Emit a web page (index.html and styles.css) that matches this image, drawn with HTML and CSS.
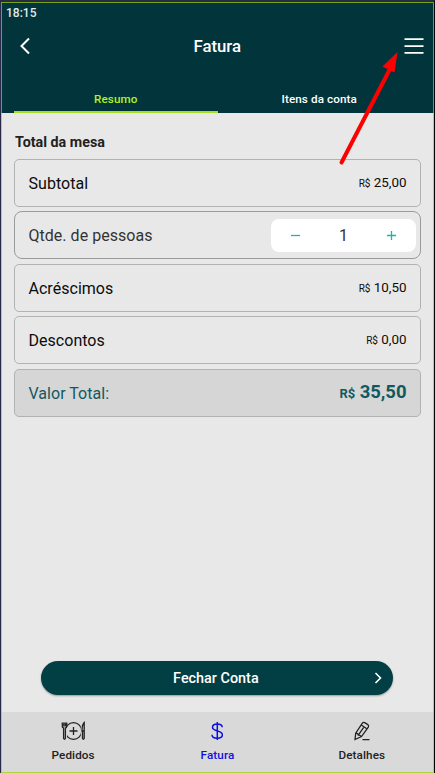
FILE: index.html
```
<!DOCTYPE html>
<html lang="pt-BR">
<head>
<meta charset="utf-8">
<title>Fatura</title>
<link rel="stylesheet" href="styles.css">
</head>
<body>
<div class="app">
  <header class="header">
    <div class="clock">18:15</div>
    <div class="titlebar">
      <svg class="back" width="12" height="18" viewBox="0 0 12 18"><path d="M10 1.500 2.500 9l7.500 7.500"/></svg>
      <h1>Fatura</h1>
      <svg class="menu" width="20" height="18" viewBox="0 0 20 18"><path d="M.5 2.200h19M.5 9.200h19M.5 15.800h19"/></svg>
    </div>
    <nav class="tabs">
      <div class="tab tab-active">Resumo</div>
      <div class="tab">Itens da conta</div>
    </nav>
  </header>
  <main class="content">
    <h2>Total da mesa</h2>
    <div class="rows">
      <div class="row"><span class="label">Subtotal</span><span class="value"><small>R$</small> 25,00</span></div>
      <div class="row row-people"><span class="label">Qtde. de pessoas</span>
        <div class="stepper">
          <svg width="9" height="10" viewBox="0 0 9 10"><path d="M0 5.500h9"/></svg>
          <span>1</span>
          <svg width="9" height="10" viewBox="0 0 9 10"><path d="M0 5.500h9M4.500 1v9"/></svg>
        </div>
      </div>
      <div class="row"><span class="label">Acréscimos</span><span class="value"><small>R$</small> 10,50</span></div>
      <div class="row"><span class="label">Descontos</span><span class="value"><small>R$</small> 0,00</span></div>
      <div class="row row-total"><span class="label">Valor Total:</span><span class="value"><small>R$</small> 35,50</span></div>
    </div>
    <div class="close-bill"><span>Fechar Conta</span>
      <svg width="8" height="12" viewBox="0 0 8 12"><path d="M1.500 1 6.500 6l-5 5"/></svg>
    </div>
  </main>
  <footer class="bottom">
    <div class="item">
      <svg width="24" height="20" viewBox="0 0 24 20">
        <circle cx="12.500" cy="10" r="8.300"/><path d="M12.500 6v8M8.500 10h8"/>
        <path class="backing" d="M1.500 2h3.800v16H1.500zM20.500 1.500h3v17h-3z"/>
        <path d="M1.300 1.500v4q0 1.300 1.300 1.500v10.500q.9 1.500 1.800 0V7q1.300-.2 1.300-1.500v-4M2.800 1.500v4M4.300 1.500v4"/>
        <path d="M23.200 1.500q-2.200 2-2.200 8.500h2.200zM21.500 10v7.500q.8 1.500 1.700 0V10"/>
      </svg>
      <span>Pedidos</span>
    </div>
    <div class="item item-active">
      <svg class="dollar" width="12" height="20" viewBox="0 0 12 20"><path d="M6.300 1v18M11.200 6.300C11.200 1.900 1.500 1.900 1.500 6.300c0 4.800 9.900 2.500 9.900 7.400 0 4.600-10.400 4.600-10.400 0"/></svg>
      <span>Fatura</span>
    </div>
    <div class="item">
      <svg width="16" height="20" viewBox="0 0 16 20"><path d="M1 18.500 1.700 12.200 8.200 2.400q.9-1.400 2.500-.8l3.100 2q1.300 1 .5 2.500L7.500 15.600zM1.700 12.200q2.300 0 2.600 1.900 1.800-.2 3.200 1.500M4.300 14.100 10.400 5.300M7.300 4l5.500 3.800M8.500 18.700h7"/></svg>
      <span>Detalhes</span>
    </div>
  </footer>
  <svg class="arrow" width="62" height="118" viewBox="0 0 62 118"><path class="shaft" d="M4.500 113.500 54 18"/><path class="head" d="M60.500 3 45.500 17.500 57.500 23.500z"/></svg>
</div>
</body>
</html>
```

FILE: styles.css
```
* { box-sizing: border-box; }
body { margin: 0; background: #29294a; font-family: Roboto, sans-serif; }
svg { display: block; fill: none; stroke: currentColor; }
.app {
  position: relative;
  display: flex;
  flex-direction: column;
  width: 435px;
  height: 773px;
  border: 1px solid #29294a;
  border-width: 2px 1px 0;
  border-right-color: #050505;
  background: #e8e8e8;
}
.app::after {
  content: "";
  position: absolute;
  inset: 0;
  border: 1px solid rgba(160, 210, 0, .72);
}
.header { height: 111px; background: #02353b; color: #fff; }
.clock { height: 25px; padding: 4px 0 0 5px; font-size: 12px; line-height: 14px; font-weight: 500; color: #e2eaea; }
.titlebar { display: flex; align-items: center; justify-content: space-between; height: 38px; padding: 0 10px 0 17.5px; }
.back { stroke-width: 2; }
.menu { stroke-width: 1.7; }
h1 { margin: 0; font-size: 16.8px; line-height: 20px; font-weight: 500; }
.tabs { display: flex; height: 48px; padding: 0 13px; }
.tab { flex: 1; padding-top: 27px; text-align: center; font-size: 11.7px; line-height: 14px; font-weight: 500; letter-spacing: .1px; border-bottom: 2px solid transparent; }
.tab-active { color: #b2f122; border-color: #a8e020; }
.content { flex: 1; padding: 20px 13px 0; }
h2 { margin: 0; padding-left: 1px; font-size: 14.3px; line-height: 18px; font-weight: 700; color: #222; }
.rows { display: flex; flex-direction: column; gap: 4.5px; margin-top: 7.9px; }
.row { display: flex; align-items: center; justify-content: space-between; height: 48px; padding: 0 13.5px; border: 1px solid #b2b2b2; border-radius: 5px; color: #0c0c0c; }
.row-people { padding-right: 4px; border-color: #9a9a9a; border-radius: 8px; color: #333; }
.label { padding-top: 2px; font-size: 16px; line-height: 20px; letter-spacing: .03px; }
.value { padding-top: 1px; font-size: 13.4px; line-height: 16px; }
.value small { font-size: 10px; }
.row-total { background: #d6d6d6; color: #12595f; }
.row-total .value { padding-top: 1px; font-size: 18.500px; font-weight: 700; line-height: 22px; letter-spacing: -.05px; }
.row-total small { font-size: 13px; }
.stepper { display: flex; align-items: center; justify-content: space-between; width: 145px; height: 33px; padding: 0 20px; border-radius: 8px; background: #fff; color: #333; font-size: 16px; }
.stepper svg { stroke: #1fb3ad; stroke-width: 1.3; }
.close-bill { display: flex; align-items: center; width: 352px; height: 34px; margin: 244px 0 0 27.4px; padding: 0 11px; border-radius: 17px; background: #023f45; color: #fff; font-size: 14.4px; font-weight: 500; box-shadow: 0 1px 2px rgba(0, 0, 0, .35); }
.close-bill span { flex: 1; padding: 2px 0 0 5px; text-align: center; }
.close-bill svg { stroke-width: 1.6; }
.bottom { display: flex; height: 61px; background: #d9d9d9; color: #222; }
.item { display: flex; flex: 1; flex-direction: column; align-items: center; padding-top: 9px; font-size: 11.7px; line-height: 14px; font-weight: 500; letter-spacing: .1px; }
.item svg { stroke-width: 1.3; }
.item span { margin-top: 7px; }
.item .dollar { stroke-width: 1.5; }
.item-active { color: #1010e0; }
.item .backing { fill: #d9d9d9; stroke: #d9d9d9; }
.arrow { position: absolute; left: 336px; top: 47px; z-index: 1; }
.shaft { stroke: red; stroke-width: 4; stroke-linecap: round; }
.head { fill: red; stroke: none; }
```
